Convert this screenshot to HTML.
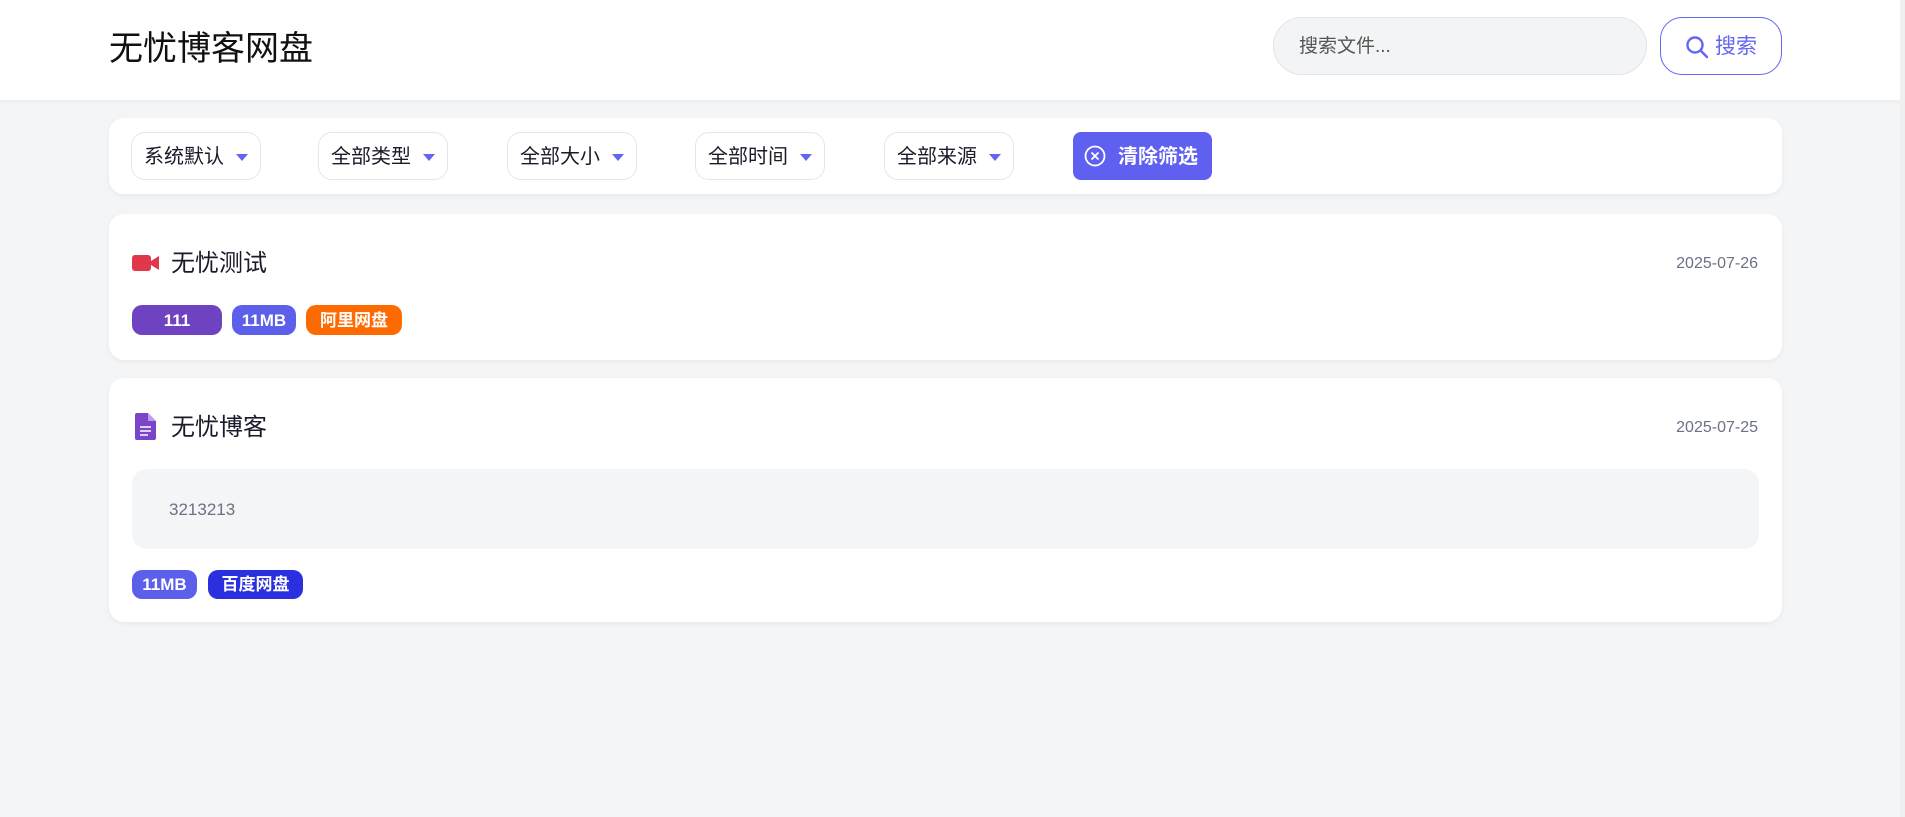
<!DOCTYPE html>
<html><head><meta charset="utf-8"><style>
*{box-sizing:border-box;margin:0;padding:0}
body{width:1905px;height:817px;background:#f4f5f7;font-family:"Liberation Sans","Noto Sans CJK SC",sans-serif;position:relative;overflow:hidden;color:#1f2030}
.hdr{position:absolute;left:0;top:0;width:1900px;height:100px;background:#fff;box-shadow:0 1px 4px rgba(0,0,0,.06)}
.sb{position:absolute;left:1900px;top:0;width:5px;height:817px;background:#f0f0f0}
.title{position:absolute;left:109px;top:27px;font-size:34px;line-height:44px;color:#111}
.search{position:absolute;left:1273px;top:17px;width:374px;height:58px;border-radius:29px;background:#f3f4f6;border:1px solid #e3e4e8;font-size:19px;color:#555;padding-left:25px;line-height:58px}
.sbtn{position:absolute;left:1660px;top:17px;width:122px;height:58px;border-radius:22px;border:1.5px solid #6366f1;color:#6366f1;font-size:21px;line-height:57px;padding-left:24px;background:#fff}
.sbtn svg{position:absolute;left:24px;top:17px}
.sbtn span{margin-left:30px}
.card{position:absolute;left:109px;width:1673px;background:#fff;border-radius:15px;box-shadow:0 2px 6px rgba(0,0,0,.05)}
.sel{position:absolute;top:14px;height:48px;width:130px;border:1px solid #e5e6ea;border-radius:14px;font-size:20px;line-height:49px;padding-left:12px;color:#1a1a2a}
.sel:after{content:"";position:absolute;right:12px;top:21px;border-left:6px solid transparent;border-right:6px solid transparent;border-top:7px solid #6366f1}
.clr{position:absolute;left:964px;top:14px;width:139px;height:48px;border-radius:8px;background:#5f60f0;color:#fff;font-size:20px;font-weight:bold;line-height:50px;padding-left:45px}
.clr svg{position:absolute;left:11px;top:13px}
.ct{position:absolute;left:62px;font-size:24px;line-height:30px;color:#1a1a2a}
.date{position:absolute;right:24px;font-size:16px;color:#6b7085}
.tag{position:absolute;height:30px;border-radius:10px;color:#fff;font-size:17px;font-weight:bold;line-height:31px;text-align:center}
</style></head><body>
<div class="hdr">
<div class="title">无忧博客网盘</div>
<div class="search">搜索文件...</div>
<div class="sbtn"><svg width="24" height="24" viewBox="0 0 24 24" fill="none" stroke="#6366f1" stroke-width="2.4" stroke-linecap="round"><circle cx="10" cy="10" r="7.5"/><path d="M15.5 15.5L22 22"/></svg><span>搜索</span></div>
</div>
<div class="sb"></div>
<div class="card" style="top:118px;height:76px">
<div class="sel" style="left:22px">系统默认</div>
<div class="sel" style="left:209px">全部类型</div>
<div class="sel" style="left:398px">全部大小</div>
<div class="sel" style="left:586px">全部时间</div>
<div class="sel" style="left:775px">全部来源</div>
<div class="clr"><svg width="22" height="22" viewBox="0 0 22 22" fill="none" stroke="#fff" stroke-width="1.8"><circle cx="11" cy="11" r="9.5"/><path d="M7.5 7.5l7 7M14.5 7.5l-7 7"/></svg>清除筛选</div>
</div>
<div class="card" style="top:214px;height:146px">
<svg style="position:absolute;left:23px;top:40px" width="27" height="18" viewBox="0 0 27 18"><rect x="0" y="1" width="19" height="16" rx="3" fill="#e0384a"/><path d="M19 7l8-5v14l-8-5z" fill="#e0384a"/></svg>
<div class="ct" style="top:35px">无忧测试</div>
<div class="date" style="top:41px">2025-07-26</div>
<div class="tag" style="left:23px;top:91px;width:90px;background:#6f42c1">111</div>
<div class="tag" style="left:123px;top:91px;width:64px;background:#5b5fea">11MB</div>
<div class="tag" style="left:197px;top:91px;width:96px;background:#ff6a00">阿里网盘</div>
</div>
<div class="card" style="top:378px;height:244px">
<svg style="position:absolute;left:26px;top:35px" width="21" height="27" viewBox="0 0 21 27"><path d="M2 0h11l8 8v17a2 2 0 0 1-2 2H2a2 2 0 0 1-2-2V2a2 2 0 0 1 2-2z" fill="#7a45c8"/><path d="M13 0v8h8z" fill="#b9a0e6"/><path d="M5 14h11M5 18h11M5 22h8" stroke="#fff" stroke-width="1.6"/></svg>
<div class="ct" style="top:35px">无忧博客</div>
<div class="date" style="top:41px">2025-07-25</div>
<div style="position:absolute;left:23px;top:91px;width:1627px;height:80px;background:#f4f5f7;border-radius:15px;font-size:17px;color:#6b7085;line-height:82px;padding-left:37px">3213213</div>
<div class="tag" style="left:23px;top:192px;width:65px;height:29px;line-height:30px;background:#5b5fea">11MB</div>
<div class="tag" style="left:99px;top:192px;width:95px;height:29px;line-height:30px;background:#2a2fdf">百度网盘</div>
</div>
</body></html>
